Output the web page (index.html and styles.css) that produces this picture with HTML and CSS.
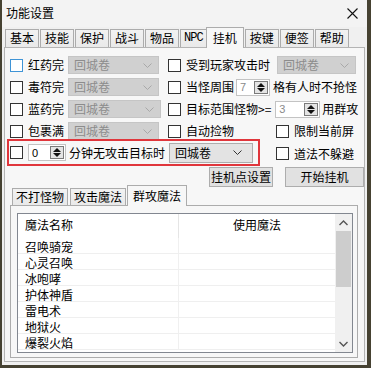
FILE: index.html
```html
<!DOCTYPE html>
<html lang="zh-CN">
<head>
<meta charset="utf-8">
<title>功能设置</title>
<link rel="stylesheet" href="styles.css">
</head>
<body>
<div class="window">
  <div class="titlebar">
    <span class="title">功能设置</span>
    <svg class="close" width="11" height="11" viewBox="0 0 11 11"><path d="M0.5 0.5 L10.5 10.5 M10.5 0.5 L0.5 10.5" stroke="#111" stroke-width="1.1" fill="none"/></svg>
  </div>
  <div class="tabstrip">
    <div class="tab">基本</div>
    <div class="tab">技能</div>
    <div class="tab">保护</div>
    <div class="tab">战斗</div>
    <div class="tab">物品</div>
    <div class="tab tab-npc">NPC</div>
    <div class="tab active">挂机</div>
    <div class="tab">按键</div>
    <div class="tab">便签</div>
    <div class="tab">帮助</div>
  </div>
  <div class="panel">
    <div class="row">
      <div class="cell-left">
        <span class="cb focus"></span><span class="lbl">红药完</span>
        <div class="combo disabled w91"><span class="ctext">回城卷</span><svg class="chev" width="9" height="5" viewBox="0 0 9 5"><polyline points="0.5,0.5 4.5,4.5 8.5,0.5" fill="none" stroke="#a8a8a8"/></svg></div>
      </div>
      <div class="cell-right">
        <span class="cb"></span><span class="lbl">受到玩家攻击时</span>
        <div class="combo disabled w79 ml7"><span class="ctext">回城卷</span><svg class="chev" width="9" height="5" viewBox="0 0 9 5"><polyline points="0.5,0.5 4.5,4.5 8.5,0.5" fill="none" stroke="#a8a8a8"/></svg></div>
      </div>
    </div>
    <div class="row">
      <div class="cell-left">
        <span class="cb"></span><span class="lbl">毒符完</span>
        <div class="combo disabled w91"><span class="ctext">回城卷</span><svg class="chev" width="9" height="5" viewBox="0 0 9 5"><polyline points="0.5,0.5 4.5,4.5 8.5,0.5" fill="none" stroke="#a8a8a8"/></svg></div>
      </div>
      <div class="cell-right">
        <span class="cb"></span><span class="lbl">当怪周围</span>
        <div class="spin w34 ml2"><span class="sval dim">7</span><span class="sbtn"><i class="up"></i><i class="dn"></i></span></div>
        <span class="txt ml3">格有人时不抢怪</span>
      </div>
    </div>
    <div class="row">
      <div class="cell-left">
        <span class="cb"></span><span class="lbl">蓝药完</span>
        <div class="combo disabled w93"><span class="ctext">回城卷</span><svg class="chev" width="9" height="5" viewBox="0 0 9 5"><polyline points="0.5,0.5 4.5,4.5 8.5,0.5" fill="none" stroke="#a8a8a8"/></svg></div>
      </div>
      <div class="cell-right">
        <span class="cb"></span><span class="lbl">目标范围怪物&gt;=</span>
        <div class="spin w45 ml4"><span class="sval dim">3</span><span class="sbtn"><i class="up"></i><i class="dn"></i></span></div>
        <span class="txt ml2">用群攻</span>
      </div>
    </div>
    <div class="row">
      <div class="cell-left">
        <span class="cb"></span><span class="lbl">包裹满</span>
        <div class="combo disabled w91"><span class="ctext">回城卷</span><svg class="chev" width="9" height="5" viewBox="0 0 9 5"><polyline points="0.5,0.5 4.5,4.5 8.5,0.5" fill="none" stroke="#a8a8a8"/></svg></div>
      </div>
      <div class="cell-right">
        <div class="group108"><span class="cb"></span><span class="lbl">自动捡物</span></div>
        <span class="cb"></span><span class="lbl">限制当前屏</span>
      </div>
    </div>
    <div class="row row5">
      <div class="highlight">
        <span class="cb"></span>
        <div class="spin w38 ml5"><span class="sval">0</span><span class="sbtn"><i class="up"></i><i class="dn"></i></span></div>
        <span class="txt ml3">分钟无攻击目标时</span>
        <div class="combo active w84 ml4"><span class="ctext">回城卷</span><svg class="chev" width="9" height="5" viewBox="0 0 9 5"><polyline points="0.5,0.5 4.5,4.5 8.5,0.5" fill="none" stroke="#333"/></svg></div>
      </div>
      <div class="right5"><span class="cb"></span><span class="lbl">道法不躲避</span></div>
    </div>
    <div class="buttons">
      <div class="btn b1">挂机点设置</div>
      <div class="btn b2">开始挂机</div>
    </div>
    <div class="subtabs">
      <div class="stab">不打怪物</div>
      <div class="stab">攻击魔法</div>
      <div class="stab active">群攻魔法</div>
    </div>
    <div class="subpanel">
      <div class="list">
        <div class="list-body">
          <div class="lhead"><div class="c1">魔法名称</div><div class="c2">使用魔法</div></div>
          <div class="lrow"><div class="c1">召唤骑宠</div><div class="c2"></div></div>
          <div class="lrow"><div class="c1">心灵召唤</div><div class="c2"></div></div>
          <div class="lrow"><div class="c1">冰咆哮</div><div class="c2"></div></div>
          <div class="lrow"><div class="c1">护体神盾</div><div class="c2"></div></div>
          <div class="lrow"><div class="c1">雷电术</div><div class="c2"></div></div>
          <div class="lrow"><div class="c1">地狱火</div><div class="c2"></div></div>
          <div class="lrow"><div class="c1">爆裂火焰</div><div class="c2"></div></div>
        </div>
        <div class="vscroll">
          <div class="sarrow"><svg width="9" height="6" viewBox="0 0 9 6"><polyline points="0.5,5 4.5,1 8.5,5" fill="none" stroke="#555" stroke-width="1.4"/></svg></div>
          <div class="thumb"></div>
          <div class="sfill"></div>
          <div class="sarrow"><svg width="9" height="6" viewBox="0 0 9 6"><polyline points="0.5,1 4.5,5 8.5,1" fill="none" stroke="#555" stroke-width="1.4"/></svg></div>
        </div>
      </div>
    </div>
  </div>
</div>
</body>
</html>
```
FILE: styles.css
```css
* { box-sizing: border-box; }
html, body { margin: 0; padding: 0; }
body {
  background: #464232;
  width: 371px;
  height: 368px;
  overflow: hidden;
  font-family: "Noto Sans CJK SC", "Noto Sans", sans-serif;
  font-size: 12px;
  color: #000;
}
.window {
  margin-left: 2px;
  width: 365px;
  height: 365px;
  background: #f0f0f0;
  display: flex;
  flex-direction: column;
}
.titlebar {
  height: 27px;
  display: flex;
  align-items: center;
  justify-content: space-between;
  padding: 0 9px 2px 4px;
  background: #f3f3f3;
}
.title { font-size: 12px; line-height: 14px; letter-spacing: 0; }
.close { display: block; margin-top: 2px; }

.tabstrip {
  height: 20px;
  display: flex;
  align-items: flex-end;
  padding-left: 3px;
  position: relative;
  z-index: 1;
}
.tab {
  height: 18px;
  padding: 0 4px;
  margin-right: 1px;
  border: 1px solid #acacac;
  border-bottom: none;
  background: linear-gradient(#f2f2f2, #e9e9e9);
  line-height: 16px;
  font-size: 12px;
  white-space: nowrap;
}
.tab-npc {
  font-family: "Liberation Mono", "DejaVu Sans Mono", monospace;
  font-size: 12px;
  padding: 0 3px;
  letter-spacing: -1px;
}
.tab.active {
  height: 21px;
  margin: 0 -1px -1px -2px;
  padding: 0 6px;
  background: #f7f7f7;
  line-height: 19px;
}
.tab.active + .tab { margin-left: 2px; }

.panel {
  margin: 0 2px 0 2px;
  height: 315px;
  border: 1px solid #b4b4b4;
  background: #f7f7f7;
  padding: 6px 0 0 5px;
  display: flex;
  flex-direction: column;
}
.row {
  height: 22px;
  display: flex;
  align-items: center;
  flex: none;
}
.cell-left {
  width: 158px;
  display: flex;
  align-items: center;
}
.cell-right {
  display: flex;
  align-items: center;
}
.cb {
  width: 13px;
  height: 13px;
  border: 1px solid #333;
  background: #fff;
  flex: none;
}
.cb.focus { border-color: #3f94d6; }
.lbl { margin-left: 5px; white-space: nowrap; line-height: 16px; }
.txt { white-space: nowrap; line-height: 16px; }
.group108 { width: 108px; display: flex; align-items: center; }

.combo {
  height: 18px;
  margin-left: 4px;
  display: flex;
  align-items: center;
  justify-content: space-between;
  padding: 0 6px 0 5px;
  flex: none;
}
.combo.disabled {
  background: #d0d0d0;
  border: 1px solid #c5c5c5;
  color: #8c8c8c;
}
.combo.active {
  height: 20px;
  background: #e3e3e3;
  border: 1px solid #adadad;
  color: #000;
  padding-right: 10px;
}
.ctext { line-height: 16px; }
.chev { display: block; }
.w91 { width: 91px; }
.w93 { width: 93px; }
.w79 { width: 79px; }
.w84 { width: 84px; }
.w34 { width: 34px; }
.w45 { width: 45px; }
.w38 { width: 38px; }
.ml2 { margin-left: 2px; }
.ml3 { margin-left: 3px; }
.ml4 { margin-left: 4px; }
.ml5 { margin-left: 5px; }
.ml7 { margin-left: 7px; }

.spin {
  height: 17px;
  border: 1px solid #c3c3c3;
  background: #fff;
  display: flex;
  align-items: center;
  justify-content: space-between;
  padding: 0 1px 0 3px;
  flex: none;
}
.sval { line-height: 14px; font-size: 11px; font-family: "Liberation Sans", "DejaVu Sans", sans-serif; }
.sval.dim { color: #8a8a8a; }
.sbtn {
  width: 14px;
  height: 13px;
  border: 1px solid #7a7a7a;
  background: #e4e4e4;
  display: flex;
  flex-direction: column;
  align-items: center;
  justify-content: center;
  gap: 1px;
}
.sbtn i { display: block; width: 0; height: 0; border-left: 4px solid transparent; border-right: 4px solid transparent; }
.sbtn .up { border-bottom: 4px solid #111; }
.sbtn .dn { border-top: 4px solid #111; }

.row5 { height: 27px; margin-top: -3px; }
.highlight {
  margin-left: -3px;
  width: 253px;
  height: 27px;
  border: 2px solid #e0363c;
  padding-left: 1px;
  display: flex;
  align-items: center;
}
.right5 { margin-left: 16px; display: flex; align-items: center; padding-top: 2px; }

.buttons {
  margin-top: 1px;
  height: 20px;
  display: flex;
  justify-content: flex-end;
  gap: 12px;
  padding-right: 0;
  flex: none;
}
.btn {
  height: 20px;
  background: #e1e1e1;
  border: 1px solid #adadad;
  text-align: center;
  line-height: 18px;
}
.b1 { width: 64px; }
.b2 { width: 79px; }

.subtabs {
  margin-top: -2px;
  height: 20px;
  display: flex;
  align-items: flex-end;
  padding-left: 2px;
  position: relative;
  z-index: 1;
  flex: none;
}
.stab {
  height: 17px;
  width: 56px;
  margin-right: 2px;
  border: 1px solid #acacac;
  border-bottom: none;
  background: linear-gradient(#f2f2f2, #e9e9e9);
  text-align: center;
  line-height: 15px;
}
.stab.active {
  height: 21px;
  width: 60px;
  margin: 0 0 -1px -1px;
  background: #f7f7f7;
  line-height: 19px;
}

.subpanel {
  width: 348px;
  height: 153px;
  border: 1px solid #acacac;
  background: #f7f7f7;
  padding: 7px 0 0 6px;
  flex: none;
}
.list {
  width: 336px;
  height: 140px;
  border: 1px solid #828790;
  background: #fff;
  display: flex;
}
.list-body { width: 317px; }
.lhead { height: 24px; display: flex; }
.lhead .c1 { padding: 3px 0 0 7px; line-height: 16px; }
.lhead .c2 { text-align: center; padding-top: 3px; line-height: 16px; border-left: 1px solid #e5e5e5; }
.c1 { width: 160px; padding-left: 7px; white-space: nowrap; }
.c2 { width: 157px; border-left: 1px solid #f0f0f0; }
.lrow {
  height: 16px;
  display: flex;
  border-bottom: 1px solid #efefef;
}
.lrow .c1 { line-height: 15px; padding-top: 1px; }
.vscroll {
  width: 17px;
  background: #f0f0f0;
  display: flex;
  flex-direction: column;
}
.sarrow { height: 17px; display: flex; align-items: center; justify-content: center; }
.thumb { height: 56px; margin: 0 1px; background: #cdcdcd; }
.sfill { flex: 1; }
```
